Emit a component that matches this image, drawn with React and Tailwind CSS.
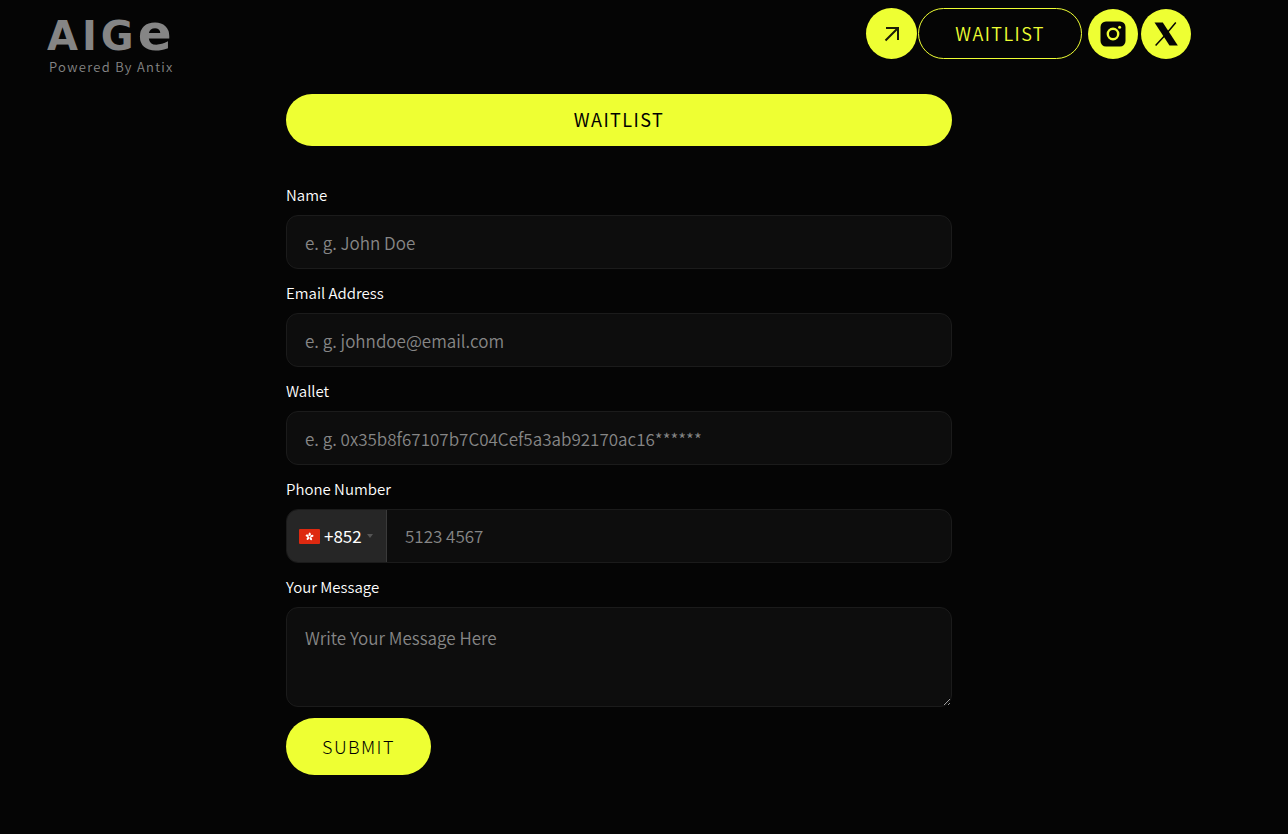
const FONT = "font-['Noto_Sans_CJK_SC','Noto_Sans',sans-serif]"

const inputClass =
  'block w-full rounded-xl border border-[#1b1b1b] bg-[#0d0d0d] px-[18px] text-[17px] font-[350] text-white placeholder:text-[#868686] outline-none focus:border-[#eeff33]'

const fields = [
  { id: 'name', label: 'Name', type: 'text', placeholder: 'e. g. John Doe' },
  { id: 'email', label: 'Email Address', type: 'email', placeholder: 'e. g. johndoe@email.com' },
  { id: 'wallet', label: 'Wallet', type: 'text', placeholder: 'e. g. 0x35b8f67107b7C04Cef5a3ab92170ac16******' },
]

function ArrowIcon() {
  return (
    <svg className="h-4 w-4" viewBox="0 0 16 16" fill="none" stroke="#1c1d08" strokeWidth="2">
      <path d="M1.5 14.5 14 2M2 2h12v12" />
    </svg>
  )
}

function InstagramIcon() {
  return (
    <svg className="h-[26px] w-[26px]" viewBox="0 0 26 26">
      <rect x="0.5" y="0.5" width="25" height="25" rx="5.5" fill="#050505" />
      <circle cx="13" cy="13" r="5.2" fill="none" stroke="#eeff33" strokeWidth="2.4" />
      <circle cx="19.6" cy="6.2" r="1.5" fill="#eeff33" />
    </svg>
  )
}

function XIcon() {
  return (
    <svg className="h-6 w-6" viewBox="0 0 24 24">
      <path d="M0.5 0.5h8.3L23.8 23.5h-8.3z" fill="#050505" />
      <path d="M21.8 0.5 13.2 10.7M10.6 13.7 1.6 23.5" stroke="#050505" strokeWidth="1.5" />
    </svg>
  )
}

function HongKongFlag() {
  return (
    <svg className="pointer-events-none h-[15px] w-[21px] shrink-0" viewBox="0 0 21 15">
      <rect width="21" height="15" rx="1" fill="#de2910" />
      <g fill="#fff" transform="translate(10.5 7.6)">
        {[0, 72, 144, 216, 288].map((angle) => (
          <ellipse key={angle} cx="0.2" cy="-2.4" rx="1.1" ry="1.7" transform={`rotate(${angle})`} />
        ))}
      </g>
    </svg>
  )
}

function Field({ id, label, children }) {
  return (
    <div>
      <label htmlFor={id} className="mb-2 block text-[15px] leading-6 font-[350] text-white">
        {label}
      </label>
      {children}
    </div>
  )
}

function Header() {
  return (
    <header className="flex items-start justify-between px-[47px] pt-2">
      <a href="#" className="block text-[#858585]">
        <span className="block h-[50px] font-['DejaVu_Sans',sans-serif] text-[40px] leading-[46px] font-bold tracking-widest">
          AIG<span className="text-[50px] leading-none">e</span>
        </span>
        <span className="block pl-[2px] text-[13px] leading-[18px] font-[350] tracking-widest">
          Powered By Antix
        </span>
      </a>
      <nav className="flex items-center">
        <a
          href="#waitlist"
          aria-label="Open waitlist"
          className="flex h-[51px] w-[51px] items-center justify-center rounded-full bg-[#eeff33]"
        >
          <ArrowIcon />
        </a>
        <a
          href="#waitlist"
          className="ml-px flex h-[51px] items-center rounded-full border border-[#eeff33] px-9 pb-[2px] text-lg font-[350] tracking-[0.08em] text-[#eeff33]"
        >
          WAITLIST
        </a>
        <div className="ml-[6px] flex gap-[3px]">
          <a
            href="#instagram"
            aria-label="Instagram"
            className="flex h-[50px] w-[50px] items-center justify-center rounded-full bg-[#eeff33]"
          >
            <InstagramIcon />
          </a>
          <a
            href="#x"
            aria-label="X"
            className="flex h-[50px] w-[50px] items-center justify-center rounded-full bg-[#eeff33]"
          >
            <XIcon />
          </a>
        </div>
      </nav>
    </header>
  )
}

export default function App() {
  return (
    <div className={`min-h-screen bg-[#050505] pr-[50px] pb-12 ${FONT}`}>
      <Header />
      <main className="mx-auto mt-[18px] max-w-[666px]">
        <button
          type="button"
          className="block h-[52px] w-full rounded-full bg-[#eeff33] pb-[2px] text-lg tracking-[0.08em] text-black"
        >
          WAITLIST
        </button>
        <form id="waitlist" className="mt-[37px]" onSubmit={(e) => e.preventDefault()}>
          <div className="flex flex-col gap-3">
            {fields.map((field) => (
              <Field key={field.id} id={field.id} label={field.label}>
                <input
                  id={field.id}
                  type={field.type}
                  placeholder={field.placeholder}
                  className={`${inputClass} h-[54px]`}
                />
              </Field>
            ))}
            <Field id="phone" label="Phone Number">
              <div className="flex h-[54px] overflow-hidden rounded-xl border border-[#1b1b1b] bg-[#0d0d0d]">
                <div className="flex w-[100px] shrink-0 items-center border-r border-[#3a3a3a] bg-[#262626] pl-3">
                  <HongKongFlag />
                  <select
                    aria-label="Country code"
                    className="ml-1 w-[43px] appearance-none bg-transparent text-[17px] text-white outline-none"
                  >
                    <option>+852</option>
                  </select>
                  <svg className="h-1 w-[6px]" viewBox="0 0 6 4">
                    <path d="M0 0h6L3 4z" fill="#555" />
                  </svg>
                </div>
                <input
                  id="phone"
                  type="tel"
                  placeholder="5123 4567"
                  className="min-w-0 flex-1 bg-transparent px-[18px] text-[17px] font-[350] text-white outline-none placeholder:text-[#868686]"
                />
              </div>
            </Field>
            <Field id="message" label="Your Message">
              <textarea
                id="message"
                placeholder="Write Your Message Here"
                className={`${inputClass} h-[100px] resize py-[17px]`}
              />
            </Field>
          </div>
          <button
            type="submit"
            className="mt-[11px] h-[57px] rounded-full bg-[#eeff33] px-9 pb-[2px] text-lg font-light tracking-[0.08em] text-black"
          >
            SUBMIT
          </button>
        </form>
      </main>
    </div>
  )
}
